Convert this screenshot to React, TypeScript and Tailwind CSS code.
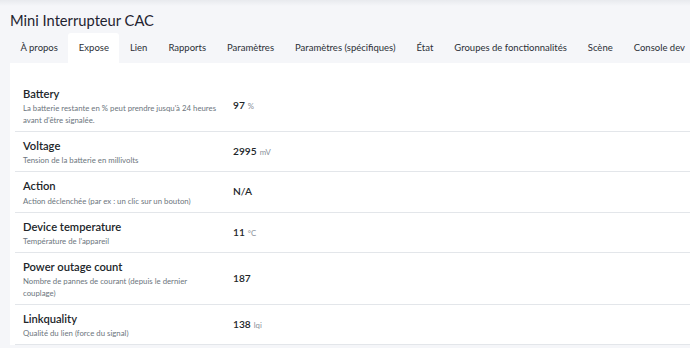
import React from 'react';

const tabs = [
  'À propos',
  'Expose',
  'Lien',
  'Rapports',
  'Paramètres',
  'Paramètres (spécifiques)',
  'État',
  'Groupes de fonctionnalités',
  'Scène',
  'Console dev',
];

const rows = [
  { id: 1, name: 'Battery', desc: "La batterie restante en % peut prendre jusqu'à 24 heures avant d'être signalée.", value: '97', unit: '%' },
  { id: 2, name: 'Voltage', desc: 'Tension de la batterie en millivolts', value: '2995', unit: 'mV' },
  { id: 3, name: 'Action', desc: 'Action déclenchée (par ex : un clic sur un bouton)', value: 'N/A', unit: '' },
  { id: 4, name: 'Device temperature', desc: "Température de l'appareil", value: '11', unit: '°C' },
  { id: 5, name: 'Power outage count', desc: 'Nombre de pannes de courant (depuis le dernier couplage)', value: '187', unit: '' },
  { id: 6, name: 'Linkquality', desc: 'Qualité du lien (force du signal)', value: '138', unit: 'lqi' },
];

const App: React.FC = () => {
  return (
    <div
      className="h-[348px] w-[690px] overflow-hidden bg-[#f5f6f9] text-[#212529]"
      style={{ fontFamily: 'Lato, "Noto Sans", sans-serif' }}
    >
      <div className="h-[6px] bg-gradient-to-b from-[#e8eaee] to-[#f5f6f9]" />
      <h1 className="px-[10px] pt-[4px] text-[14.7px] leading-[20px] font-normal text-[#1f2430]">Mini Interrupteur CAC</h1>

      <div className="mt-[3px] flex pl-[10px] whitespace-nowrap">
        {tabs.map((tab) => (
          <div
            key={tab}
            className={`h-[30px] px-[10.5px] text-[9.5px] leading-[30px] text-[#2b2f36] ${
              tab === 'Expose' ? 'rounded-t-[3px] bg-white' : ''
            }`}
          >
            {tab}
          </div>
        ))}
      </div>

      <div className="ml-[10px] bg-white pt-[17px] pl-[5px]">
        {rows.map((row) => (
          <div key={row.id} className="flex items-center border-b border-[#e3e6ea] py-[5px]">
            <div className="w-[218px] shrink-0 pl-[8px] pr-[13px]">
              <div className="text-[11.2px] leading-[17.2px] font-semibold text-[#212529]">{row.name}</div>
              <div className="text-[7.8px] leading-[12px] text-[#6c757d]">{row.desc}</div>
            </div>
            <div className="text-[10.2px] font-semibold text-[#212529]">
              {row.value}
              {row.unit && <span className="ml-[3px] text-[7.8px] font-normal text-[#8a9099]">{row.unit}</span>}
            </div>
          </div>
        ))}
      </div>
    </div>
  );
};

export default App;
